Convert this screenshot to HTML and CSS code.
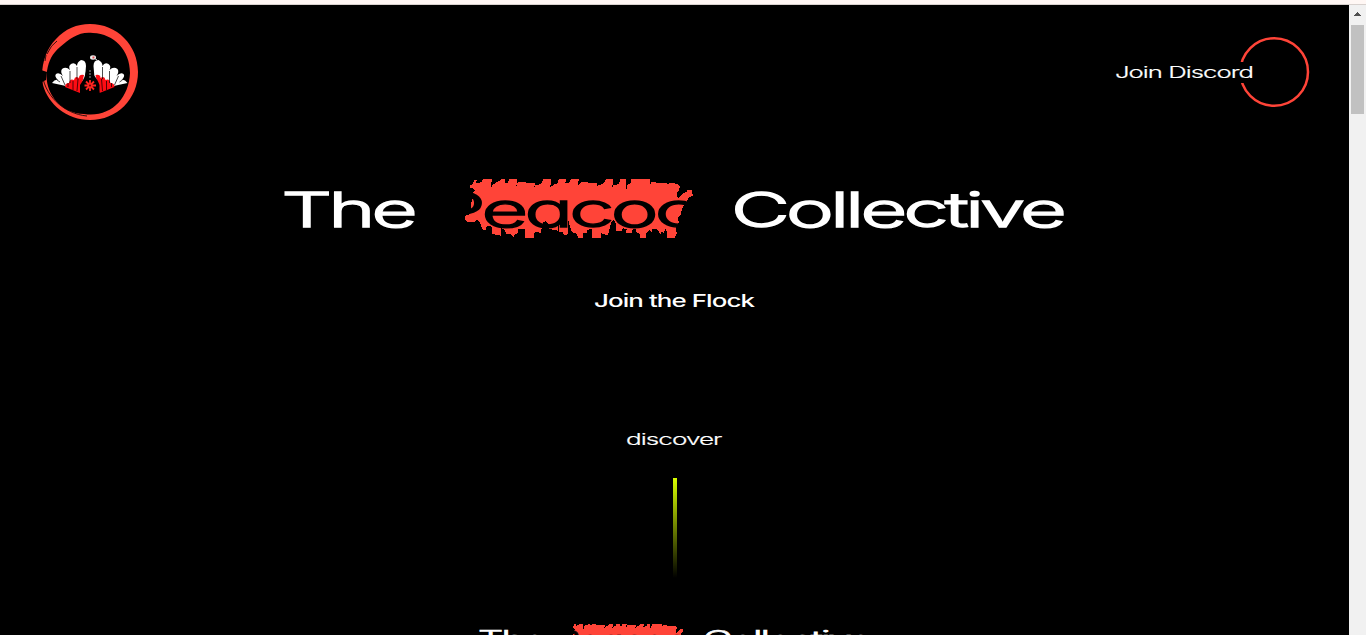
FILE: index.html
```
<!DOCTYPE html>
<html lang="en">
<head>
<meta charset="utf-8">
<title>The Peacock Collective</title>
<link rel="stylesheet" href="styles.css">
</head>
<body>
<svg class="defs" aria-hidden="true">
  <defs>
    <linearGradient id="fade" x1="0" y1="0" x2="0" y2="1"><stop offset="0" stop-color="#d8ff00"/><stop offset="1" stop-color="#d8ff00" stop-opacity="0"/></linearGradient>
    <path id="brush" shape-rendering="crispEdges" d="M45 45 52 43 58 29 65 30 64 40 79 37 84 28 110 28 109 47 111 60 113 42 121 42 123 35 135 34 137 28 151 28 150 38 158 38 163 28 186 28 185 43 182 50 185 46 188 37 213 37 214 39 224 38 241 38 240 44 236 54 241 46 258 42 260 37 265 28 289 28 289 40 284 49 284 58 287 48 296 46 298 42 308 40 311 28 333 28 331 40 342 40 347 28 371 28 370 43 366 50 372 44 378 37 387 37 410 38 427 38 427 43 423 54 428 46 444 42 446 37 451 36 452 28 474 28 473 42 471 53 475 46 491 42 496 28 513 28 514 59 517 44 526 42 528 28 585 28 584 43 588 43 590 36 616 39 636 39 636 43 650 38 669 43 675 50 671 61 667 68 668 87 677 79 686 70 694 66 698 60 712 60 713 78 700 83 696 94 687 105 681 119 676 137 668 144 672 157 665 169 663 180 666 190 660 203 635 203 637 188 632 177 626 190 620 185 617 194 609 182 606 176 598 178 591 176 590 186 583 180 574 191 574 203 556 203 556 193 546 188 540 175 532 179 530 189 513 189 515 177 503 175 499 184 484 182 481 154 477 150 470 154 465 169 462 184 459 197 438 190 439 203 411 203 411 178 395 179 395 188 384 190 384 203 369 203 366 191 351 187 347 177 340 150 338 170 339 192 329 197 323 187 313 187 311 163 308 182 294 179 282 177 283 166 272 153 264 157 260 177 256 190 245 185 238 189 237 203 211 203 209 177 188 178 188 189 178 194 178 203 166 193 154 191 149 181 137 171 137 197 112 192 110 170 96 168 91 181 81 178 76 159 67 148 58 157 40 157 30 150 31 138 44 132 47 113 50 94 56 79 47 73 59 62 53 55 45 55Z"/>
  </defs>
</svg>
<div class="chrome"></div>
<div class="viewport">
  <main class="page">
    <header class="top">
      <svg class="logo" viewBox="0 0 98 98" role="img" aria-label="Peacock">
        <path fill="#ff4438" fill-rule="evenodd" d="M49 1C76 1 97 22 97 49S76 97 49 97C26 97 7 81 2 62C-1 45 4 27 15 16C24 6 36 1 49 1ZM52 10C39 8 29 15 19 24C11 31 8 37 6 48C3 68 18 90 43 91C69 95 88 76 89 50C89 27 73 11 52 10Z"/>
        <path fill="none" stroke="#000" stroke-width=".8" d="M1 48C2 72 23 91 46 93"/>
        <path fill="none" stroke="#000" stroke-width=".8" d="M4 38 5 32M6 31Q10 22 16 18"/>
        <path fill="#000" d="M0 47 6 49 5 57 1 59Z"/>
        <path fill="#fff" d="M11 60Q14 56 17 57Q13 53 15 51Q18 49 22 53Q19 49 21 46Q25 43 29 47Q27 43 30 41Q34 39 36 43Q36 39 40 37Q45 37 45 43L44 55L37 64L25 63Z"/>
        <path fill="#fd0c13" d="M24 64Q24 60 28 60Q29 55 33 57Q34 52 38 55Q38 51 43 52L39 70Z"/>
        <path stroke="#000" stroke-width=".7" d="M36 56V44M29 60V48M24 62 20 53M19 59 16 57M27 64V60M32 67V58M36 68 37 56"/>
        <g transform="matrix(-1 0 0 1 97.5 0)">
          <path fill="#fff" d="M11 60Q14 56 17 57Q13 53 15 51Q18 49 22 53Q19 49 21 46Q25 43 29 47Q27 43 30 41Q34 39 36 43Q36 39 40 37Q45 37 45 43L44 55L37 64L25 63Z"/>
          <path fill="#fd0c13" d="M24 64Q24 60 28 60Q29 55 33 57Q34 52 38 55Q38 51 43 52L39 70Z"/>
          <path stroke="#000" stroke-width=".7" d="M36 56V44M29 60V48M24 62 20 53M19 59 16 57M27 64V60M32 67V58M36 68 37 56"/>
        </g>
        <path fill="#000" d="M39 72V62Q45 54 45.5 44Q45 35 49 34L52 38V51Q57 57 58.5 62V72Z"/>
        <ellipse cx="52" cy="34.5" rx="3" ry="2.2" fill="#eee"/><path fill="#e74b50" d="M51.5 33.5h2v2h-2z"/><path stroke="#ddd" d="m53 35 3 2"/>
        <path stroke="#999" stroke-dasharray="2 1" d="M49 47V56"/>
        <path stroke="#ff2520" stroke-width="1.8" d="M49 57V68M43.5 62.5H55M45 58.5 53 66.5M53 58.5 45 66.5"/><circle cx="49" cy="62.5" r="1" fill="#600"/>
      </svg>
      <a class="discord">
        <svg class="fit" viewBox="0 0 196 72">
          <circle cx="160.2" cy="36" r="33.8" fill="none" stroke="#ff4438" stroke-width="2.5"/>
          <path d="M0 26H139V47H0Z"/>
          <text class="thin" x="1" y="42.2" font-size="16" textLength="138" lengthAdjust="spacingAndGlyphs">Join Discord</text>
        </svg>
      </a>
    </header>
    <h1 class="title">
      <svg class="fit" viewBox="284 170 782 80">
        <text class="word" x="281.5" y="226.5" textLength="132.5" lengthAdjust="spacingAndGlyphs">The</text>
        <use href="#brush" fill="#ff4438" transform="translate(455 170) scale(.3333)"/>
        <text class="word dark" x="435" y="226.5" textLength="300" lengthAdjust="spacingAndGlyphs">Peacock</text>
        <text class="word" x="731" y="226.5" textLength="332" lengthAdjust="spacingAndGlyphs">Collective</text>
      </svg>
    </h1>
    <p class="tagline"><svg class="fit" viewBox="0 0 162 30"><text class="semi" x="0" y="21.5" font-size="17" textLength="160" lengthAdjust="spacingAndGlyphs">Join the Flock</text></svg></p>
    <div class="discover"><svg class="fit" viewBox="0 0 98 30"><text class="thin" x="0" y="20.3" font-size="16" textLength="95.5" lengthAdjust="spacingAndGlyphs">discover</text></svg></div>
    <svg class="line" viewBox="0 0 4 100"><path fill="url(#fade)" d="M0 0H4V100H0Z"/></svg>
    <h2 class="subtitle">
      <svg class="fit" viewBox="284 170 782 80">
        <text class="word" x="280" y="227" textLength="133" lengthAdjust="spacingAndGlyphs">The</text>
        <use href="#brush" fill="#ff4438" transform="translate(455 168) scale(.3333)"/>
        <text class="word dark" x="435" y="227" textLength="300" lengthAdjust="spacingAndGlyphs">Peacock</text>
        <text class="word" x="732" y="227" textLength="337" lengthAdjust="spacingAndGlyphs">Collective</text>
      </svg>
    </h2>
  </main>
  <aside class="scrollbar">
    <svg class="arrow" viewBox="0 0 17 20"><path fill="#505050" d="M5 11H12V10H11V9H10V8H9V7H8V8H7V9H6V10H5Z"/></svg>
    <div class="thumb"></div>
  </aside>
</div>
</body>
</html>
```
FILE: styles.css
```
* { box-sizing: border-box; }
body {
  margin: 0;
  height: 635px;
  overflow: hidden;
  background: #000;
  color: #fff;
  font-family: Inter, "Liberation Sans", sans-serif;
  font-feature-settings: "cv11" 1;
}
h1, h2, p { margin: 0; }
svg { display: block; flex: none; }
.defs { width: 0; height: 0; position: absolute; }
.fit { width: 100%; height: 100%; overflow: visible; }
.chrome { height: 5px; background: #fff7f4; border-bottom: 1px solid #d8d1ce; }
.viewport { display: flex; height: 630px; }
.page {
  width: 1349px;
  height: 630px;
  overflow: hidden;
  display: flex;
  flex-direction: column;
  align-items: center;
}
.top {
  width: 100%;
  height: 165px;
  flex: none;
  padding: 18px 39px 0 41px;
  display: flex;
  justify-content: space-between;
}
.logo { width: 98px; height: 98px; }
.discord { width: 196px; height: 72px; margin-top: 13px; }
.title { width: 782px; height: 80px; flex: none; }
.tagline { width: 162px; height: 30px; margin-top: 35px; flex: none; }
.discover { width: 98px; height: 30px; margin-top: 110px; flex: none; }
.line { width: 4px; height: 100px; margin-top: 23px; }
.subtitle { width: 389px; height: 40px; margin-top: 42px; flex: none; }
.word {
  font-size: 48px;
  font-weight: 300;
  letter-spacing: -2.2px;
  fill: #fff;
  stroke: #fff;
  stroke-width: 1.4px;
}
.dark { fill: #000; stroke: #000; }
.thin { font-weight: 300; letter-spacing: -.6px; fill: #fff; stroke: #fff; stroke-width: .2px; }
.semi { font-weight: 500; letter-spacing: -.6px; fill: #fff; }
.scrollbar { width: 17px; background: #f1f1f1; }
.arrow { width: 17px; height: 20px; }
.thumb { width: 13px; height: 89px; margin-left: 2px; background: #c1c1c1; }
```
